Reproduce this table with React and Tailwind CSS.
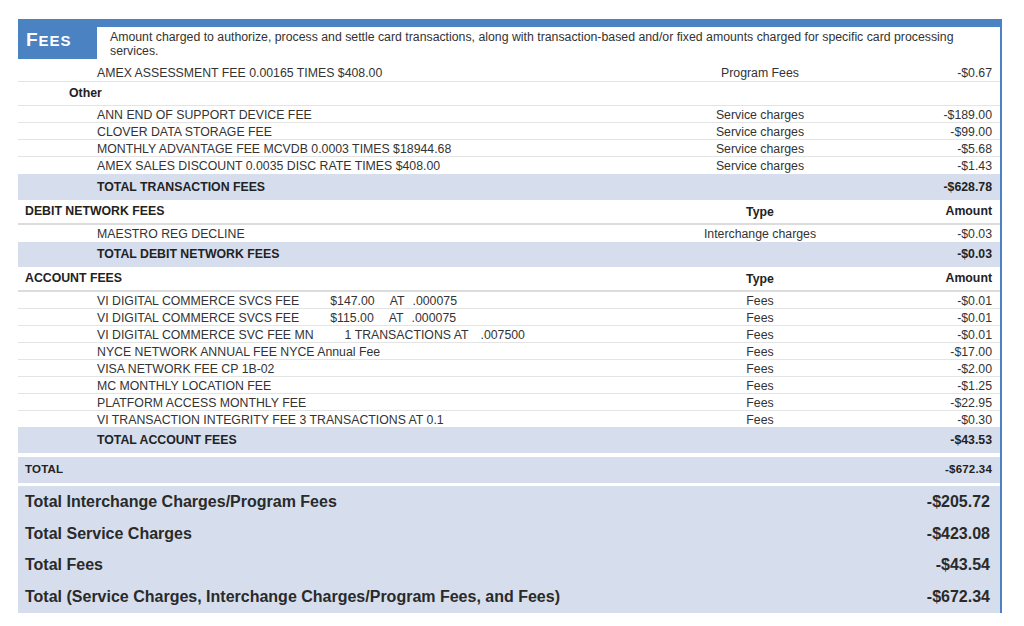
const cols = 'grid grid-cols-[1fr_200px_140px] items-center';

const FeeRow = ({ label, type, amount, last, h = 'h-[17px]', children }) => (
  <div
    className={`${cols} ${h} text-[12.3px] text-[#333] ${last ? '' : 'border-b border-[#e4e4e4]'}`}
  >
    <div className="pl-[79px] whitespace-nowrap">
      {label}
      {children}
    </div>
    <div className="text-center whitespace-nowrap">{type}</div>
    <div className="text-right pr-[8px]">{amount}</div>
  </div>
);

const SectionHeader = ({ title, h = 'h-[25px]' }) => (
  <div className={`${cols} ${h} border-b-2 border-[#dcdcdc] text-[12.3px] font-bold text-[#222]`}>
    <div className="pl-[7px] whitespace-nowrap">{title}</div>
    <div className="text-center pt-[2px]">Type</div>
    <div className="text-right pr-[8px]">Amount</div>
  </div>
);

const TotalBand = ({ label, amount, h = 'h-[25px]' }) => (
  <div className={`${cols} ${h} bg-[#d6deed] text-[12.3px] font-bold text-[#222]`}>
    <div className="pl-[79px] whitespace-nowrap">{label}</div>
    <div />
    <div className="text-right pr-[8px]">{amount}</div>
  </div>
);

const summary = [
  ['Total Interchange Charges/Program Fees', '-$205.72', 'h-[32px]'],
  ['Total Service Charges', '-$423.08', 'h-[31px]'],
  ['Total Fees', '-$43.54', 'h-[32px]'],
  ['Total (Service Charges, Interchange Charges/Program Fees, and Fees)', '-$672.34', 'h-[32px]'],
];

const accountRows = [
  ['NYCE NETWORK ANNUAL FEE NYCE Annual Fee', '-$17.00'],
  ['VISA NETWORK FEE CP 1B-02', '-$2.00'],
  ['MC MONTHLY LOCATION FEE', '-$1.25'],
  ['PLATFORM ACCESS MONTHLY FEE', '-$22.95'],
];

export default function App() {
  return (
    <div className="w-[1024px] h-[626px] bg-white pt-[19px] pl-[18px] font-['Liberation_Sans',Arial,sans-serif]">
      <div className="w-[984px] border-t-[8px] border-r-2 border-[#4a82c2]">
        {/* header */}
        <div className="flex h-[32px]">
          <div className="w-[79px] bg-[#4a82c2] text-white font-bold tracking-[1px] pl-[8px] pt-[3px] leading-none">
            <span className="text-[19px]">F</span>
            <span className="text-[15px]">EES</span>
          </div>
          <p className="pl-[13px] pt-[3px] max-w-[880px] text-[12.3px] leading-[14px] text-[#333]">
            Amount charged to authorize, process and settle card transactions, along with
            transaction-based and/or fixed amounts charged for specific card processing services.
          </p>
        </div>

        <div className="mt-[4px]">
          <div className={`${cols} h-[19px] pt-[1px] border-b border-[#e4e4e4] text-[12.3px] text-[#333]`}>
            <div className="pl-[79px] whitespace-nowrap">AMEX ASSESSMENT FEE 0.00165 TIMES $408.00</div>
            <div className="text-center">Program Fees</div>
            <div className="text-right pr-[8px]">-$0.67</div>
          </div>
          <div className="h-[24px] flex items-center border-b border-[#e4e4e4] pl-[51px] text-[12.3px] font-bold text-[#222]">
            Other
          </div>
          <FeeRow label="ANN END OF SUPPORT DEVICE FEE" type="Service charges" amount="-$189.00" />
          <FeeRow label="CLOVER DATA STORAGE FEE" type="Service charges" amount="-$99.00" />
          <FeeRow
            label="MONTHLY ADVANTAGE FEE MCVDB 0.0003 TIMES $18944.68"
            type="Service charges"
            amount="-$5.68"
          />
          <FeeRow
            label="AMEX SALES DISCOUNT 0.0035 DISC RATE TIMES $408.00"
            type="Service charges"
            amount="-$1.43"
            last
          />
          <TotalBand label="TOTAL TRANSACTION FEES" amount="-$628.78" h="h-[26px]" />

          <SectionHeader title="DEBIT NETWORK FEES" />
          <FeeRow label="MAESTRO REG DECLINE" type="Interchange charges" amount="-$0.03" last />
          <TotalBand label="TOTAL DEBIT NETWORK FEES" amount="-$0.03" />

          <SectionHeader title="ACCOUNT FEES" h="h-[25px]" />
          <FeeRow label="VI DIGITAL COMMERCE SVCS FEE" type="Fees" amount="-$0.01">
            <span className="ml-[31px]">$147.00</span>
            <span className="ml-[15px]">AT</span>
            <span className="ml-[8px]">.000075</span>
          </FeeRow>
          <FeeRow label="VI DIGITAL COMMERCE SVCS FEE" type="Fees" amount="-$0.01">
            <span className="ml-[31px]">$115.00</span>
            <span className="ml-[15px]">AT</span>
            <span className="ml-[8px]">.000075</span>
          </FeeRow>
          <FeeRow label="VI DIGITAL COMMERCE SVC FEE MN" type="Fees" amount="-$0.01">
            <span className="ml-[31px]">1 TRANSACTIONS AT</span>
            <span className="ml-[12px]">.007500</span>
          </FeeRow>
          {accountRows.map(([label, amount]) => (
            <FeeRow key={label} label={label} type="Fees" amount={amount} />
          ))}
          <FeeRow
            label="VI TRANSACTION INTEGRITY FEE 3 TRANSACTIONS AT 0.1"
            type="Fees"
            amount="-$0.30"
            h="h-[16px]"
            last
          />
          <TotalBand label="TOTAL ACCOUNT FEES" amount="-$43.53" h="h-[26px]" />

          <div
            className={`${cols} mt-[4px] h-[26px] bg-[#d6deed] text-[11.5px] tracking-[0.2px] font-bold text-[#222]`}
          >
            <div className="pl-[7px]">TOTAL</div>
            <div />
            <div className="text-right pr-[8px]">-$672.34</div>
          </div>

          <div className="mt-[3px] bg-[#d6deed]">
            {summary.map(([label, amount, h]) => (
              <div
                key={label}
                className={`flex items-center justify-between ${h} pl-[7px] pr-[10px] text-[16px] font-bold text-[#2a2a2a]`}
              >
                <span>{label}</span>
                <span>{amount}</span>
              </div>
            ))}
          </div>
        </div>
      </div>
    </div>
  );
}
